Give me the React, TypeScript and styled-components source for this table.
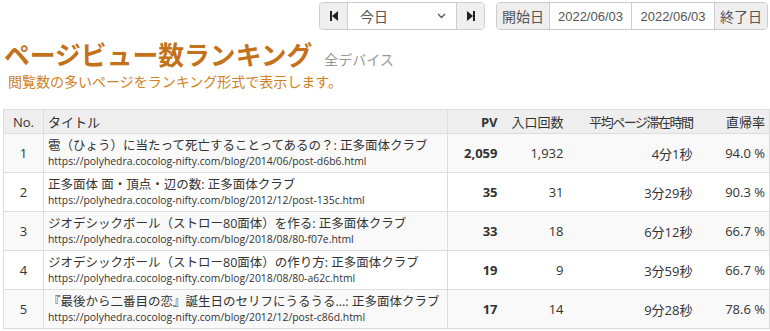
import styled, { createGlobalStyle } from 'styled-components';

const GlobalStyle = createGlobalStyle`
  html, body {
    margin: 0;
    padding: 0;
    background: #fff;
  }
  body {
    font-family: "Open Sans", "Noto Sans CJK JP", sans-serif;
    color: #333;
  }
`;

interface RankRow {
  no: number;
  title: string;
  url: string;
  pv: string;
  entries: string;
  stay: string;
  bounce: string;
}

const rows: RankRow[] = [
  {
    no: 1,
    title: '雹（ひょう）に当たって死亡することってあるの？: 正多面体クラブ',
    url: 'https://polyhedra.cocolog-nifty.com/blog/2014/06/post-d6b6.html',
    pv: '2,059',
    entries: '1,932',
    stay: '4分1秒',
    bounce: '94.0 %',
  },
  {
    no: 2,
    title: '正多面体 面・頂点・辺の数: 正多面体クラブ',
    url: 'https://polyhedra.cocolog-nifty.com/blog/2012/12/post-135c.html',
    pv: '35',
    entries: '31',
    stay: '3分29秒',
    bounce: '90.3 %',
  },
  {
    no: 3,
    title: 'ジオデシックボール（ストロー80面体）を作る: 正多面体クラブ',
    url: 'https://polyhedra.cocolog-nifty.com/blog/2018/08/80-f07e.html',
    pv: '33',
    entries: '18',
    stay: '6分12秒',
    bounce: '66.7 %',
  },
  {
    no: 4,
    title: 'ジオデシックボール（ストロー80面体）の作り方: 正多面体クラブ',
    url: 'https://polyhedra.cocolog-nifty.com/blog/2018/08/80-a62c.html',
    pv: '19',
    entries: '9',
    stay: '3分59秒',
    bounce: '66.7 %',
  },
  {
    no: 5,
    title: '『最後から二番目の恋』誕生日のセリフにうるうる...: 正多面体クラブ',
    url: 'https://polyhedra.cocolog-nifty.com/blog/2012/12/post-c86d.html',
    pv: '17',
    entries: '14',
    stay: '9分28秒',
    bounce: '78.6 %',
  },
];

const Page = styled.div`
  padding: 2px 2px 0 3px;
`;

const Toolbar = styled.div`
  display: flex;
  justify-content: flex-end;
  gap: 11px;
  height: 28px;
`;

const Group = styled.div`
  display: flex;
  height: 28px;
  box-sizing: border-box;
  border: 1px solid #ccc;
  border-radius: 4px;
  overflow: hidden;
  font-family: "Liberation Sans", "Noto Sans CJK JP", sans-serif;
`;

const NavButton = styled.div`
  width: 27px;
  display: flex;
  align-items: center;
  justify-content: center;
  background: #efefef;
`;

const SelectBox = styled.div`
  width: 110px;
  display: flex;
  align-items: center;
  justify-content: space-between;
  padding: 0 10px 0 12px;
  box-sizing: border-box;
  background: #fff;
  border-left: 1px solid #ccc;
  border-right: 1px solid #ccc;
  font-size: 14px;
  color: #555;
`;

const AddOn = styled.div<{ $side: 'left' | 'right' }>`
  display: flex;
  align-items: center;
  padding: 0 5px;
  background: #eee;
  font-size: 14px;
  color: #555;
  border-${(p) => (p.$side === 'left' ? 'right' : 'left')}: 1px solid #ccc;
`;

const DateInput = styled.div<{ $last?: boolean }>`
  width: 82px;
  box-sizing: border-box;
  display: flex;
  align-items: center;
  justify-content: center;
  background: #fff;
  font-size: 13px;
  color: #555;
  ${(p) => (p.$last ? '' : 'border-right: 1px solid #ccc;')}
`;

const Heading = styled.div`
  display: flex;
  align-items: baseline;
  gap: 12px;
  margin-top: 8px;
  padding-left: 1px;
`;

const Title = styled.h1`
  margin: 0;
  font-family: "Noto Sans CJK JP", sans-serif;
  font-size: 25.8px;
  line-height: 31px;
  font-weight: bold;
  color: #c4721a;
`;

const Devices = styled.span`
  font-family: "Noto Sans CJK JP", sans-serif;
  font-size: 14px;
  color: #999;
`;

const Lead = styled.p`
  margin: 3px 0 0 5px;
  font-family: "Noto Sans CJK JP", sans-serif;
  font-size: 14px;
  line-height: 18px;
  color: #d0821e;
`;

const Table = styled.table`
  margin-top: 19px;
  width: 766px;
  border-collapse: collapse;
  border: 1px solid #ddd;
  font-size: 13px;
  table-layout: fixed;
`;

const Th = styled.th<{ $w: number; $align?: string; $bold?: boolean; $sep?: boolean; $tight?: boolean }>`
  box-sizing: border-box;
  width: ${(p) => p.$w}px;
  height: 24px;
  padding: 0 4px;
  background: #eee;
  font-weight: ${(p) => (p.$bold ? 'bold' : 'normal')};
  text-align: ${(p) => p.$align || 'left'};
  border-bottom: 1px solid #ddd;
  ${(p) => (p.$sep ? 'border-right: 1px solid #ddd;' : '')}
  letter-spacing: ${(p) => (p.$tight ? '-1.5px' : '0')};
  color: #333;
  white-space: nowrap;
`;

const Tr = styled.tr<{ $striped: boolean }>`
  background: ${(p) => (p.$striped ? '#f9f9f9' : '#fff')};
  border-bottom: 1px solid #ddd;
`;

const Td = styled.td<{ $align?: string; $bold?: boolean; $sep?: boolean }>`
  box-sizing: border-box;
  height: 39px;
  padding: 0 4px;
  text-align: ${(p) => p.$align || 'left'};
  font-weight: ${(p) => (p.$bold ? 'bold' : 'normal')};
  ${(p) => (p.$sep ? 'border-right: 1px solid #ddd;' : '')}
  vertical-align: middle;
  white-space: nowrap;
`;

const PageTitle = styled.div`
  font-size: 12.5px;
  line-height: 16px;
  white-space: nowrap;
`;

const PageUrl = styled.div`
  font-size: 10.4px;
  line-height: 15px;
  white-space: nowrap;
`;

const FirstIcon = () => (
  <svg width="8" height="10" viewBox="0 0 8 10">
    <rect x="0" y="0" width="2" height="10" fill="#222" />
    <path d="M8 0 L2 5 L8 10 Z" fill="#222" />
  </svg>
);

const LastIcon = () => (
  <svg width="8" height="10" viewBox="0 0 8 10">
    <rect x="6" y="0" width="2" height="10" fill="#222" />
    <path d="M0 0 L6 5 L0 10 Z" fill="#222" />
  </svg>
);

const Chevron = () => (
  <svg width="9" height="6" viewBox="0 0 9 6">
    <path d="M1 1 L4.5 4.5 L8 1" fill="none" stroke="#555" strokeWidth="1.3" />
  </svg>
);

export default function App(): JSX.Element {
  return (
    <Page>
      <GlobalStyle />
      <Toolbar>
        <Group>
          <NavButton><FirstIcon /></NavButton>
          <SelectBox>
            今日
            <Chevron />
          </SelectBox>
          <NavButton><LastIcon /></NavButton>
        </Group>
        <Group>
          <AddOn $side="left">開始日</AddOn>
          <DateInput>2022/06/03</DateInput>
          <DateInput $last>2022/06/03</DateInput>
          <AddOn $side="right">終了日</AddOn>
        </Group>
      </Toolbar>
      <Heading>
        <Title>ページビュー数ランキング</Title>
        <Devices>全デバイス</Devices>
      </Heading>
      <Lead>閲覧数の多いページをランキング形式で表示します。</Lead>
      <Table>
        <thead>
          <tr>
            <Th $w={40} $align="center" $sep>No.</Th>
            <Th $w={404} $sep>タイトル</Th>
            <Th $w={54} $align="right" $bold>PV</Th>
            <Th $w={66} $align="right">入口回数</Th>
            <Th $w={129} $align="right" $tight>平均ページ滞在時間</Th>
            <Th $w={73} $align="right">直帰率</Th>
          </tr>
        </thead>
        <tbody>
          {rows.map((r) => (
            <Tr key={r.no} $striped={r.no % 2 === 1}>
              <Td $align="center" $sep>{r.no}</Td>
              <Td $sep>
                <PageTitle>{r.title}</PageTitle>
                <PageUrl>{r.url}</PageUrl>
              </Td>
              <Td $align="right" $bold>{r.pv}</Td>
              <Td $align="right">{r.entries}</Td>
              <Td $align="right">{r.stay}</Td>
              <Td $align="right">{r.bounce}</Td>
            </Tr>
          ))}
        </tbody>
      </Table>
    </Page>
  );
}
